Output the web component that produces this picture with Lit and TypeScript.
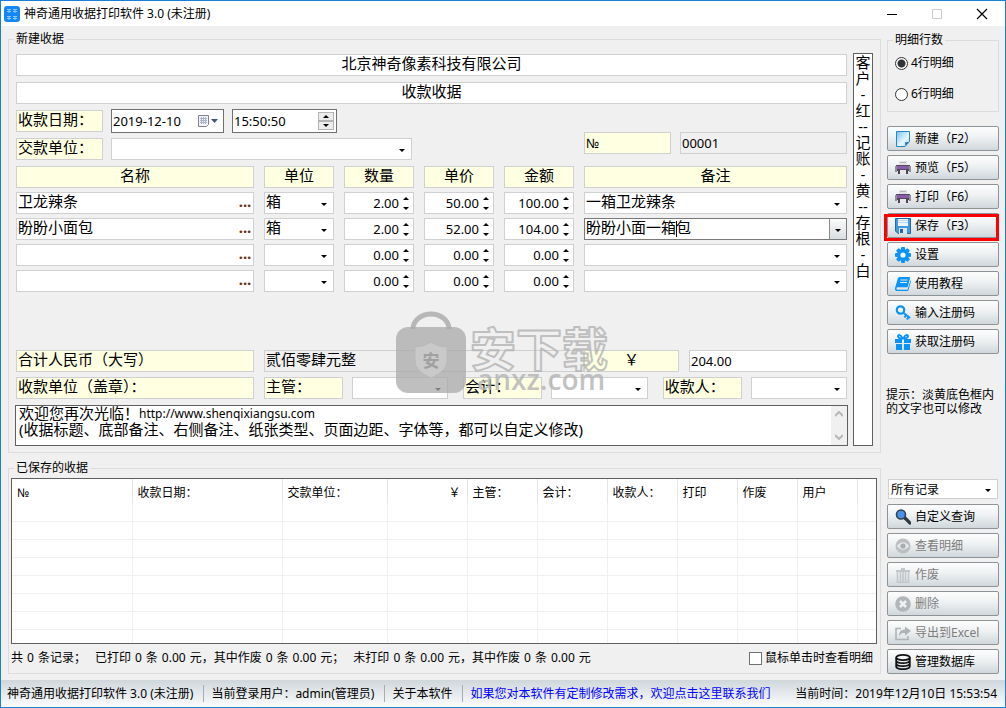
import { LitElement, html, css, svg, nothing, TemplateResult } from "lit";
import { customElement } from "lit/decorators.js";

interface Line {
  name: string;
  unit: string;
  qty: string;
  price: string;
  amount: string;
  note: string;
  active?: boolean;
}

const LINES: Line[] = [
  { name: "卫龙辣条", unit: "箱", qty: "2.00", price: "50.00", amount: "100.00", note: "一箱卫龙辣条" },
  { name: "盼盼小面包", unit: "箱", qty: "2.00", price: "52.00", amount: "104.00", note: "盼盼小面一箱包", active: true },
  { name: "", unit: "", qty: "0.00", price: "0.00", amount: "0.00", note: "" },
  { name: "", unit: "", qty: "0.00", price: "0.00", amount: "0.00", note: "" },
];

const HEADINGS = ["名称", "单位", "数量", "单价", "金额", "备注"];
const SAVED_COLUMNS = ["№", "收款日期：", "交款单位：", "￥", "主管：", "会计：", "收款人：", "打印", "作废", "用户", ""];
const SIDE_NOTE = "客\n户\n-\n红\n--\n记\n账\n-\n黄\n--\n存\n根\n-\n白";
const SUMMARY = [
  ["共", "0", "条记录；"],
  ["已打印", "0", "条", "0.00", "元，其中作废", "0", "条", "0.00", "元；"],
  ["未打印", "0", "条", "0.00", "元，其中作废", "0", "条", "0.00", "元"],
];

const printer = svg`
  <path d="M4 1h8v5H4z" fill="#e2e2e8"/>
  <path d="M5 2h6v1H5z" fill="#b4b4bd"/>
  <path d="M1 5h14v6H1z" fill="#54485e"/>
  <path d="M2 6h12v3H2z" fill="#8b5bab"/>
  <path d="M0 6h2v6H0zM14 6h2v6h-2z" fill="#8f8f96"/>
  <path d="M3 10h2v4H3zM11 10h2v4h-2z" fill="#4b4454"/>
  <path d="M5 10h6v5H5z" fill="#e6e6ec"/>`;

const ICONS: Record<string, TemplateResult> = {
  page: svg`
    <defs><linearGradient id="pg" x1="0" y1="0" x2="1" y2="1">
      <stop offset="0" stop-color="#6fc3f5"/><stop offset=".6" stop-color="#e8f7ff"/><stop offset="1" stop-color="#9bd6f8"/>
    </linearGradient></defs>
    <path d="M1.500 .5h13v10l-4.500 5H1.500z" fill="url(#pg)" stroke="#2b86c8"/>
    <path d="M9.500 15.500c1-1.500 1-3 .5-4.500 1.500.5 3 .4 4.500-.5z" fill="#1e6fb4"/>`,
  printer,
  save: svg`
    <path d="M.5 .5h15v15H3l-2.500-2.500z" fill="#3f9be0" stroke="#2767a5"/>
    <path d="M3 1h10v7H3z" fill="#eef5fb"/>
    <path d="M3 2h10v1H3zM3 4h10v1H3z" fill="#bcd9ef"/>
    <path d="M4 10h8v6H4z" fill="#dfe5ea"/>
    <path d="M5 11h3v4H5z" fill="#2767a5"/>`,
  gear: svg`
    <g fill="#0b93f5"><circle cx="8" cy="8" r="6"/>
    ${[0, 45, 90, 135].map((a) => svg`<rect x="6" y="0" width="4" height="16" rx="1" transform="rotate(${a} 8 8)"/>`)}</g>
    <circle cx="8" cy="8" r="2.600" fill="#f3f6f8"/>`,
  book: svg`
    <path d="M4.500 1H14a1 1 0 0 1 1 1.300l-2.200 8.200a1 1 0 0 1-1 .7H2.200a1.500 1.500 0 0 0 0 2.600H12.500L15.600 4l.4 1-2.500 9a1.400 1.400 0 0 1-1.300 1H2A2.300 2.300 0 0 1 .2 11.500L2.800 2.500A2 2 0 0 1 4.500 1z" fill="#0b93f5"/>
    <path d="M5.500 4h7M5 6.500h7" stroke="#d9eefc" fill="none"/>`,
  key: svg`
    <g fill="none" stroke="#0b93f5"><circle cx="5.500" cy="5" r="3.700" stroke-width="2.200"/>
    <path d="M8 7.500l7 5.500M11 10l-1.500 2.500M13.500 12L12 14.500" stroke-width="2"/></g>`,
  gift: svg`
    <path d="M0 5h7v4H0zM9 5h7v4H9zM1 10h6v6H1zM9 10h6v6H9z" fill="#0b93f5"/>
    <path d="M7.500 4.500C6 0 2.500.5 3 2.500S6 4.500 7.500 4.500zM8.500 4.500C10 0 13.500.5 13 2.500S10 4.500 8.500 4.500z" fill="none" stroke="#0b93f5" stroke-width="1.800"/>`,
  search: svg`
    <path d="M10 9l5 5" stroke="#2f3b42" stroke-width="3.200" stroke-linecap="round"/>
    <circle cx="6" cy="5.500" r="4.500" fill="#4d90e8" stroke="#2f4452" stroke-width="1.600"/>`,
  eye: svg`
    <circle cx="8" cy="8" r="7.500" fill="#bcbfc1"/>
    <path d="M2 8q6-7.500 12 0-6 7.500-12 0z" fill="#e6e8e9"/><circle cx="8" cy="8" r="2.600" fill="#a9acae"/>`,
  trash: svg`
    <path d="M1 3h14v2H1zM6 1h4v2H6z" fill="#c2c6c8"/>
    <path d="M2.500 5v10.500h11V5M5.500 5v10M8 5v10M10.500 5v10" stroke="#c2c6c8" stroke-width="1.600" fill="none"/>`,
  cross: svg`
    <circle cx="8" cy="8" r="7.800" fill="#b3b6b8"/>
    <path d="M5 5l6 6M11 5l-6 6" stroke="#eff1f2" stroke-width="2.600"/>`,
  share: svg`
    <path d="M6 3.500H1v11h12V11" fill="none" stroke="#b0b3b5" stroke-width="1.600"/>
    <path d="M4 11c0-4.500 2.500-6.500 6-6.500V1.500L16 6l-6 4.500V8C7.500 8 5.500 8.500 4 11z" fill="#b0b3b5"/>`,
  database: svg`
    <g fill="none" stroke="#111" stroke-width="1.800"><ellipse cx="8" cy="3.500" rx="6.800" ry="2.600"/>
    <path d="M1.200 3.500v9c0 3.600 13.600 3.600 13.600 0v-9M1.200 6.500c0 3.600 13.600 3.600 13.600 0M1.200 9.500c0 3.600 13.600 3.600 13.600 0"/></g>`,
};

interface Action {
  icon: string;
  label: string;
  disabled?: boolean;
  marked?: boolean;
}

const TOP_ACTIONS: Action[] = [
  { icon: "page", label: "新建（F2）" },
  { icon: "printer", label: "预览（F5）" },
  { icon: "printer", label: "打印（F6）" },
  { icon: "save", label: "保存（F3）", marked: true },
  { icon: "gear", label: "设置" },
  { icon: "book", label: "使用教程" },
  { icon: "key", label: "输入注册码" },
  { icon: "gift", label: "获取注册码" },
];

const RECORD_ACTIONS: Action[] = [
  { icon: "search", label: "自定义查询" },
  { icon: "eye", label: "查看明细", disabled: true },
  { icon: "trash", label: "作废", disabled: true },
  { icon: "cross", label: "删除", disabled: true },
  { icon: "share", label: "导出到Excel", disabled: true },
  { icon: "database", label: "管理数据库" },
];

@customElement("app-root")
export class AppRoot extends LitElement {
  static styles = css`
    :host {
      display: block;
      font: 12px/14px "Noto Sans", "Noto Sans CJK SC", sans-serif;
      color: #000;
    }
    * { box-sizing: border-box; }
    input, select, textarea, button {
      font: inherit;
      color: inherit;
      margin: 0;
      padding: 0;
      border: 0;
      border-radius: 0;
      outline: 0;
      background: none;
      appearance: none;
      min-width: 0;
    }
    fieldset { margin: 0; padding: 0; border: 1px solid #dcdcdc; min-width: 0; }
    legend { margin-left: 5px; padding: 0 2px; line-height: 14px; }

    .window {
      display: flex;
      flex-direction: column;
      min-height: 100vh;
      border: 1px solid #1a80d5;
      background: #f0f0f0;
      position: relative;
    }
    .titlebar {
      display: flex;
      align-items: center;
      height: 25px;
      padding: 0 17px 0 3px;
      gap: 4px;
      background: #fff;
    }
    .titlebar h1 { flex: 1; margin: 0; font-size: 12px; font-weight: 400; }
    .controls { display: flex; gap: 33px; }
    .controls button { width: 12px; height: 12px; display: flex; }

    .main {
      flex: 1;
      display: grid;
      grid-template-columns: minmax(0, 1fr) 112px;
      gap: 6px;
      padding: 6px 6px 6px 7px;
    }
    .left { display: flex; flex-direction: column; gap: 8px; }

    .receipt { display: flex; gap: 6px; padding: 7px 7px 6px; }
    .form { flex: 1; display: flex; flex-direction: column; gap: 6px; min-width: 0; padding-top: 1px; }
    .side-note {
      width: 20px;
      border: 1px solid #5f5f5f;
      background: #fff;
      resize: none;
      overflow: hidden;
      text-align: center;
      font-size: 15px;
      line-height: 16px;
      white-space: pre;
    }

    .box {
      width: 100%;
      height: 22px;
      padding: 0 1px 5px;
      border: 1px solid #d0d0d0;
      background: #fff;
      font-size: 15px;
      line-height: 15px;
    }
    .cream { background: #ffffe1; }
    .grey { background: #f0f0f0; }
    .center { text-align: center; }
    .num { font-size: 13px; padding-bottom: 1px; }
    .caption { width: 87px; flex: none; }

    .meta { display: flex; justify-content: space-between; align-items: flex-end; }
    .meta-left { display: flex; flex-direction: column; gap: 6px; }
    .meta-row { display: flex; gap: 8px; height: 22px; align-items: center; }
    .serial { display: grid; grid-template-columns: 87px 1fr; gap: 9px; width: 263px; padding-bottom: 6px; }

    .field {
      display: flex;
      align-items: center;
      height: 22px;
      border: 1px solid #d0d0d0;
      background: #fff;
      position: relative;
      min-width: 0;
    }
    .field input, .field select { flex: 1; width: 100%; height: 100%; padding: 0 1px 5px; font-size: 15px; line-height: 15px; }
    .field .digits { font-size: 13px; padding-bottom: 0; }
    .field select { padding-bottom: 4px; }
    .dark { height: 24px; border-color: #707070; }
    .date { width: 113px; }
    .time { width: 105px; padding-right: 2px; }
    .payer { width: 301px; }
    .drop::after {
      content: "";
      position: absolute;
      right: 6px;
      top: 50%;
      border: 3px solid transparent;
      border-top-color: #000;
      border-bottom: 0;
      pointer-events: none;
    }
    .drop select { padding-right: 14px; }
    .drop-button {
      width: 17px;
      height: 100%;
      border-left: 1px solid #8a8a8a;
      background: linear-gradient(#fafbfb, #d8dfe2);
    }
    .active { border-color: #7a7a7a; }
    .active.drop::after { right: 5px; }
    .caret { position: absolute; left: 91px; top: 2px; width: 1px; height: 16px; background: #000; }
    .more { width: 16px; height: 100%; padding-bottom: 4px; font-size: 15px; font-weight: 700; line-height: 16px; color: #6b3414; }
    .spin { display: flex; flex-direction: column; gap: 6px; width: 13px; padding: 2px 1px 0 0; align-items: center; }
    .spin button { display: flex; width: 9px; height: 4px; justify-content: center; }
    .spin-boxed { gap: 0; width: 16px; padding: 0; }
    .spin-boxed button {
      width: 16px;
      height: 9px;
      align-items: center;
      border: 1px solid #b4b4b4;
      background: #ececec;
    }
    .right { text-align: right; }

    .lines { display: grid; grid-template-columns: 238px repeat(4, 70px) minmax(0, 1fr); gap: 4px 10px; }
    .totals { display: flex; flex-direction: column; gap: 5px; padding-top: 52px; }
    .total-row { display: grid; grid-template-columns: 238px minmax(0, 1fr) 158px; column-gap: 10px; }
    .sum { display: grid; grid-template-columns: minmax(0, 1fr) 95px; }
    .sign-row { display: grid; grid-template-columns: 238px minmax(0, 1fr); column-gap: 10px; }
    .pairs { display: grid; grid-template-columns: repeat(3, minmax(0, 1fr)); column-gap: 15px; }
    .pair { display: grid; grid-template-columns: 79px minmax(0, 1fr); gap: 9px; }

    .foot-note { display: flex; height: 41px; border: 1px solid #5f5f5f; background: #fff; margin: 0 -1px; }
    .foot-lines { flex: 1; display: flex; flex-direction: column; min-width: 0; padding-left: 3px; }
    .foot-first { display: flex; align-items: center; height: 15px; }
    .foot-first input { width: 120px; height: 15px; padding-bottom: 2px; font-size: 15px; line-height: 15px; }
    .foot-first a { color: #000; text-decoration: none; }
    .foot-lines textarea {
      flex: 1;
      resize: none;
      overflow: hidden;
      white-space: pre;
      font-size: 15px;
      line-height: 17px;
    }
    .scroll { width: 16px; background: #f0f0f0; display: flex; flex-direction: column; justify-content: space-between; align-items: center; padding: 5px 0; }
    .scroll button { display: flex; }

    .saved { flex: 1; display: flex; flex-direction: column; }
    .saved-inner { padding: 3px 3px 0 2px; display: flex; flex-direction: column; height: 100%; }
    .table-box { height: 166px; border: 1px solid #5f5f5f; background: #fff; overflow: hidden; }
    table { width: 100%; border-collapse: collapse; table-layout: fixed; }
    th { height: 24px; padding: 3px 0 0 5px; font-weight: 400; text-align: left; border-right: 1px solid #e5e5e5; white-space: nowrap; }
    th.right { text-align: right; padding-right: 6px; }
    td { height: 18px; padding: 0; border-right: 1px solid #f0f0f0; border-bottom: 1px solid #f0f0f0; }
    th:last-child, td:last-child { border-right: 0; }
    .w120 { width: 120px; } .w150 { width: 150px; } .w105 { width: 105px; } .w80 { width: 80px; }
    .w70 { width: 70px; } .w60 { width: 60px; }
    .summary { display: flex; justify-content: space-between; align-items: center; height: 28px; padding-right: 4px; }
    .counts { display: flex; gap: 9px; }
    .count { display: flex; gap: 4px; }
    .check { display: flex; align-items: center; gap: 3px; }
    .check input { width: 13px; height: 13px; border: 1px solid #707070; background: #fff; }

    .sidebar { display: flex; flex-direction: column; padding-top: 1px; }
    .choices { display: flex; flex-direction: column; gap: 17px; padding: 9px 6px 10px 7px; }
    .choices label { display: flex; align-items: center; gap: 3px; }
    .choices input { width: 13px; height: 13px; border: 1px solid #333; border-radius: 50%; background: #fff; }
    .choices input:checked { background: radial-gradient(circle, #333 3.5px, #fff 4.5px); }
    .actions { display: flex; flex-direction: column; gap: 4px; }
    .actions.first { padding-top: 14px; }
    .action {
      display: flex;
      align-items: center;
      gap: 4px;
      height: 25px;
      padding: 0 7px;
      border: 1px solid #8e9397;
      border-radius: 2px;
      background: linear-gradient(#fdfdfd, #eef1f2 45%, #d0d7db);
      position: relative;
      white-space: nowrap;
    }
    .action span { padding-top: 1px; }
    .action:disabled { color: #7d7d7d; }
    .marked::after { content: ""; position: absolute; inset: 0 -1px -4px -4px; border: 3px solid #f00; }
    .hint { margin: 34px -4px 0 -1px; }
    .records { margin-top: auto; display: flex; flex-direction: column; gap: 5px; }
    .records .field { height: 20px; margin: 0 1px; }
    .records select { font-size: 12px; padding: 1px 14px 0 2px; }

    .status {
      display: flex;
      align-items: center;
      height: 27px;
      padding: 0 8px 0 6px;
      background: linear-gradient(#cfd7db, #fbfcfc);
      white-space: nowrap;
    }
    .status span { padding-right: 10px; margin-right: 7px; border-right: 1px solid #a9adaf; line-height: 17px; }
    .status a { flex: 1; color: #00f; text-decoration: none; }

    .watermark { position: absolute; left: 394px; top: 309px; pointer-events: none; }
    .mark-cn { font: 700 46px "Noto Sans CJK SC", sans-serif; fill: none; stroke: #b2b2b2; stroke-width: 2px; stroke-opacity: 0.8; stroke-linejoin: round; }
    .mark-en { font: 600 28px "Open Sans", sans-serif; fill: #b2b2b2; fill-opacity: 0.8; }
    .mark-seal { font: 700 17px "Noto Sans CJK SC", sans-serif; fill: #a0a0a0; }
  `;

  private tri(up: boolean) {
    return html`<svg width="6" height="3" viewBox="0 0 6 3"><path d=${up ? "M0 3h6L3 0z" : "M0 0h6L3 3z"} /></svg>`;
  }

  private spin(boxed = false) {
    return html`<div class="spin ${boxed ? "spin-boxed" : ""}">
      <button aria-label="增加">${this.tri(true)}</button>
      <button aria-label="减少">${this.tri(false)}</button>
    </div>`;
  }

  private select(label: string, value = "") {
    return html`<div class="field drop">
      <select aria-label=${label}><option>${value}</option></select>
    </div>`;
  }

  private number(label: string, value: string) {
    return html`<div class="field">
      <input class="digits right" aria-label=${label} .value=${value} />${this.spin()}
    </div>`;
  }

  private line(l: Line) {
    return html`
      <div class="field"><input aria-label="名称" .value=${l.name} /><button class="more" aria-label="选择">...</button></div>
      ${this.select("单位", l.unit)} ${this.number("数量", l.qty)} ${this.number("单价", l.price)}
      ${this.number("金额", l.amount)}
      ${l.active
        ? html`<div class="field drop active">
            <input aria-label="备注" .value=${l.note} /><span class="caret"></span>
            <button class="drop-button" aria-label="展开"></button>
          </div>`
        : this.select("备注", l.note)}
    `;
  }

  private action(a: Action) {
    return html`<button class="action ${a.marked ? "marked" : ""}" ?disabled=${a.disabled}>
      <svg width="16" height="16" viewBox="0 0 16 16">${ICONS[a.icon]}</svg><span>${a.label}</span>
    </button>`;
  }

  private pair(label: string) {
    return html`<div class="pair">
      <input class="box cream" aria-label="标题" .value=${label} />${this.select(label)}
    </div>`;
  }

  render() {
    const widths = ["w120", "w150", "w105", "w80", "w70", "w70", "w70", "w60", "w60", "w60", ""];
    return html`
      <div class="window">
        <header class="titlebar">
          <svg width="16" height="16" viewBox="0 0 16 16">
            <rect width="16" height="16" rx="3" fill="#1487f7" />
            <path d="M3 3.500h4M3 5.500h4M9 3.500h4M9 5.500h4M3 10.500h4M3 12.500h4M9 10.500h4M9 12.500h4M5 3v4M11 3v4M5 10v4M11 10v4" stroke="#8cc6ff" />
          </svg>
          <h1>神奇通用收据打印软件 3.0 (未注册)</h1>
          <div class="controls">
            <button aria-label="最小化"><svg width="12" height="12"><path d="M1 6.500h10" stroke="#000" /></svg></button>
            <button aria-label="最大化"><svg width="12" height="12"><path d="M1.500 1.500h9v9h-9z" fill="none" stroke="#ccc" /></svg></button>
            <button aria-label="关闭"><svg width="12" height="12"><path d="M1 1l10 10M11 1L1 11" stroke="#000" stroke-width="1.200" /></svg></button>
          </div>
        </header>

        <main class="main">
          <div class="left">
            <fieldset>
              <legend>新建收据</legend>
              <div class="receipt">
                <div class="form">
                  <input class="box center" aria-label="公司" .value=${"北京神奇像素科技有限公司"} />
                  <input class="box center" aria-label="收据标题" .value=${"收款收据"} />
                  <div class="meta">
                    <div class="meta-left">
                      <div class="meta-row">
                        <input class="box cream caption" aria-label="标题" .value=${"收款日期："} />
                        <div class="field dark date">
                          <input class="digits" aria-label="收款日期" .value=${"2019-12-10"} />
                          <svg width="26" height="14" viewBox="0 0 26 14">
                            <path d="M1.500 1.500h10v9l-2 2h-8z" fill="#f4f4f8" stroke="#85808c" />
                            <path d="M3 4.500h7M3 6.500h7M3 8.500h7M4.500 3v7M6.500 3v7M8.500 3v7" stroke="#aab4cc" />
                            <path d="M14 5h7l-3.500 4z" fill="#3d5778" />
                          </svg>
                        </div>
                        <div class="field dark time">
                          <input class="digits" aria-label="收款时间" .value=${"15:50:50"} />${this.spin(true)}
                        </div>
                      </div>
                      <div class="meta-row">
                        <input class="box cream caption" aria-label="标题" .value=${"交款单位："} />
                        <div class="payer">${this.select("交款单位")}</div>
                      </div>
                    </div>
                    <div class="serial">
                      <input class="box cream num" aria-label="标题" .value=${"№"} />
                      <input class="box grey num" aria-label="编号" readonly .value=${"00001"} />
                    </div>
                  </div>
                  <div class="lines">
                    ${HEADINGS.map((h) => html`<input class="box cream center" aria-label="标题" .value=${h} />`)}
                    ${LINES.map((l) => this.line(l))}
                  </div>
                  <div class="totals">
                    <div class="total-row">
                      <input class="box cream" aria-label="标题" .value=${"合计人民币（大写）"} />
                      <div class="sum">
                        <input class="box grey" aria-label="大写金额" readonly .value=${"贰佰零肆元整"} />
                        <input class="box cream center" aria-label="标题" .value=${"￥"} />
                      </div>
                      <div class="field"><input class="digits" aria-label="合计" .value=${"204.00"} /></div>
                    </div>
                    <div class="sign-row">
                      <input class="box cream" aria-label="标题" .value=${"收款单位（盖章）："} />
                      <div class="pairs">${this.pair("主管：")} ${this.pair("会计：")} ${this.pair("收款人：")}</div>
                    </div>
                  </div>
                  <div class="foot-note">
                    <div class="foot-lines">
                      <div class="foot-first">
                        <input aria-label="欢迎语" .value=${"欢迎您再次光临！"} />
                        <a href="#">http://www.shenqixiangsu.com</a>
                      </div>
                      <textarea aria-label="底部备注" .value=${"(收据标题、底部备注、右侧备注、纸张类型、页面边距、字体等，都可以自定义修改)"}></textarea>
                    </div>
                    <div class="scroll">
                      <button aria-label="向上"><svg width="8" height="6"><path d="M0 5l4-4 4 4" fill="none" stroke="#b8b8b8" stroke-width="2" /></svg></button>
                      <button aria-label="向下"><svg width="8" height="6"><path d="M0 1l4 4 4-4" fill="none" stroke="#b8b8b8" stroke-width="2" /></svg></button>
                    </div>
                  </div>
                </div>
                <textarea class="side-note" aria-label="右侧备注" .value=${SIDE_NOTE}></textarea>
              </div>
            </fieldset>

            <fieldset class="saved">
              <legend>已保存的收据</legend>
              <div class="saved-inner">
                <div class="table-box">
                  <table>
                    <thead>
                      <tr>
                        ${SAVED_COLUMNS.map((c, i) => html`<th class="${widths[i]} ${c === "￥" ? "right" : ""}">${c}</th>`)}
                      </tr>
                    </thead>
                    <tbody>
                      ${Array.from({ length: 8 }, () => html`<tr>${SAVED_COLUMNS.map(() => html`<td>${nothing}</td>`)}</tr>`)}
                    </tbody>
                  </table>
                </div>
                <div class="summary">
                  <div class="counts">
                    ${SUMMARY.map((g) => html`<div class="count">${g.map((t) => html`<span>${t}</span>`)}</div>`)}
                  </div>
                  <label class="check"><input type="checkbox" />鼠标单击时查看明细</label>
                </div>
              </div>
            </fieldset>
          </div>

          <aside class="sidebar">
            <fieldset>
              <legend>明细行数</legend>
              <div class="choices">
                <label><input type="radio" name="rows" checked />4行明细</label>
                <label><input type="radio" name="rows" />6行明细</label>
              </div>
            </fieldset>
            <div class="actions first">${TOP_ACTIONS.map((a) => this.action(a))}</div>
            <p class="hint">提示：淡黄底色框内的文字也可以修改</p>
            <div class="records">
              ${this.select("记录范围", "所有记录")}
              <div class="actions">${RECORD_ACTIONS.map((a) => this.action(a))}</div>
            </div>
          </aside>
        </main>

        <footer class="status">
          <span>神奇通用收据打印软件 3.0 (未注册)</span>
          <span>当前登录用户：admin(管理员)</span>
          <span>关于本软件</span>
          <a href="#">如果您对本软件有定制修改需求，欢迎点击这里联系我们</a>
          <time>当前时间：2019年12月10日 15:53:54</time>
        </footer>

        <svg class="watermark" width="220" height="90" viewBox="0 0 220 90">
          <path d="M18 19a18 15 0 0 1 36 0" fill="none" stroke="#a9a9a9" stroke-opacity=".8" stroke-width="5" />
          <rect x="1" y="17" width="70" height="66" rx="12" fill="#a9a9a9" fill-opacity=".75" />
          <path d="M36 32q7 5 16 5v14q0 10-16 17-16-7-16-17V37q9 0 16-5z" fill="#c9c9c9" stroke="#b9b9b9" />
          <text class="mark-seal" x="36" y="57" text-anchor="middle">安</text>
          <text class="mark-cn" x="75" y="56">安下载</text>
          <text class="mark-en" x="82" y="80">anxz.com</text>
        </svg>
      </div>
    `;
  }
}
